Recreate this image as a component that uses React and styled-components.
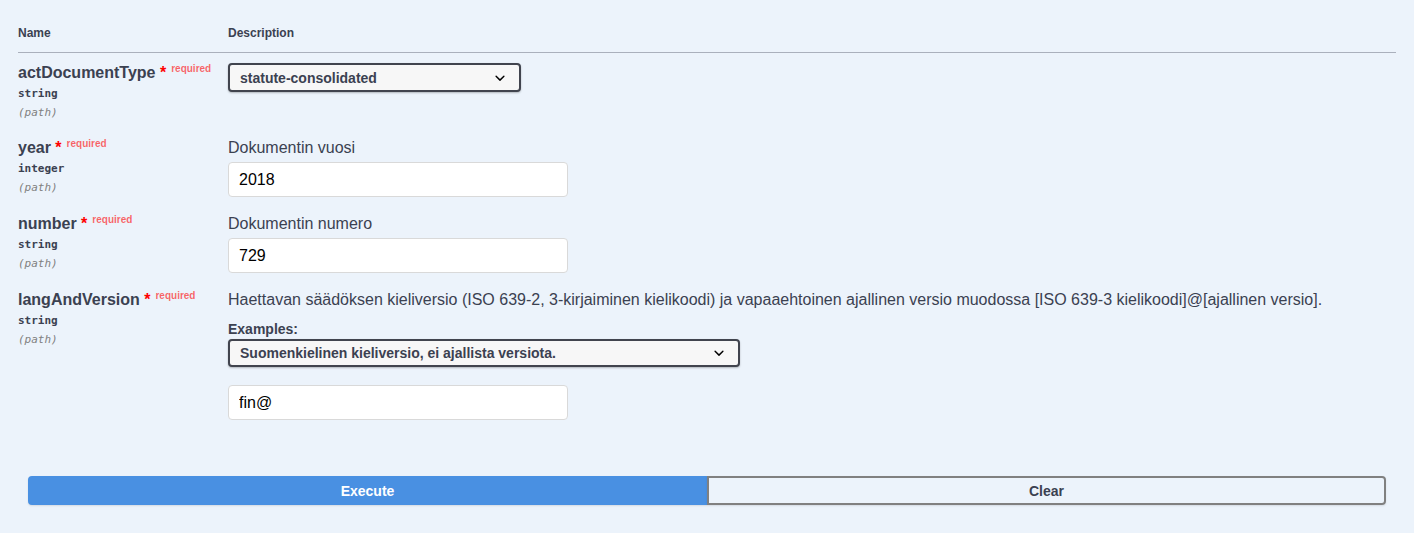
import React from "react";
import styled, { createGlobalStyle } from "styled-components";

const GlobalStyle = createGlobalStyle`
  html, body {
    margin: 0;
    padding: 0;
    background: #ecf3fb;
  }
  body {
    font-family: "Liberation Sans", Arial, sans-serif;
    color: #3b4151;
  }
`;

const Page = styled.div`
  padding: 0 18px;
`;

const TableHead = styled.div`
  display: grid;
  grid-template-columns: 210px 1fr;
  padding: 26px 0 11px;
  border-bottom: 1px solid #aab0bc;
  font-size: 12px;
  font-weight: 700;
  line-height: 15px;
`;

const ParamRow = styled.div`
  display: grid;
  grid-template-columns: 210px 1fr;
  padding: 10px 0 ${(p) => p.$bottom || 0}px;
`;

const NameCol = styled.div`
  display: flex;
  flex-direction: column;
  padding-bottom: 8px;
`;

const ParamName = styled.div`
  font-size: 16px;
  font-weight: 700;
  line-height: 19px;
  white-space: nowrap;
`;

const Star = styled.span`
  color: red;
`;

const Required = styled.span`
  font-size: 10px;
  font-weight: 700;
  line-height: 0;
  color: rgba(255, 0, 0, 0.6);
  padding: 5px;
  position: relative;
  top: -6px;
`;

const ParamType = styled.div`
  font-family: "DejaVu Sans Mono", "Liberation Mono", monospace;
  font-size: 11px;
  font-weight: 700;
  line-height: 14px;
  padding: 5px 0 0;
`;

const ParamIn = styled.div`
  font-family: "DejaVu Sans Mono", "Liberation Mono", monospace;
  font-size: 11px;
  font-style: italic;
  color: #808080;
  line-height: 14px;
  padding-top: 5px;
`;

const DescCol = styled.div`
  display: flex;
  flex-direction: column;
  align-items: flex-start;
`;

const DescText = styled.div`
  font-size: 16px;
  line-height: 19px;
  white-space: nowrap;
`;

const ExamplesLabel = styled.div`
  font-size: 14px;
  font-weight: 700;
  line-height: 16px;
  margin: 12px 0 2px;
`;

const SelectWrap = styled.div`
  position: relative;
  width: ${(p) => p.$width}px;
`;

const Select = styled.select`
  display: block;
  appearance: none;
  width: 100%;
  height: ${(p) => p.$height}px;
  box-sizing: border-box;
  font-family: "Liberation Sans", Arial, sans-serif;
  font-size: 14px;
  font-weight: 700;
  color: #3b4151;
  padding: 0 40px 0 10px;
  background: #f7f7f7;
  border: 2px solid #41444e;
  border-radius: 4px;
  box-shadow: 0 1px 2px 0 rgba(0, 0, 0, 0.25);
  outline: none;
`;

const Arrow = styled.svg`
  position: absolute;
  right: 11px;
  top: 50%;
  width: 20px;
  height: 20px;
  margin-top: -10px;
  pointer-events: none;
`;

const TextInput = styled.input`
  display: block;
  box-sizing: border-box;
  width: 340px;
  height: 35px;
  margin: ${(p) => p.$top}px 0 5px;
  padding: 8px 10px;
  font-family: "Liberation Sans", Arial, sans-serif;
  font-size: 16px;
  color: #000;
  background: #fff;
  border: 1px solid #d9d9d9;
  border-radius: 4px;
  outline: none;
`;

const ButtonBar = styled.div`
  display: flex;
  padding: 51px 10px 28px;
`;

const Button = styled.button`
  flex: 1;
  height: 29px;
  font-family: "Liberation Sans", Arial, sans-serif;
  font-size: 14px;
  font-weight: 700;
  box-shadow: 0 1px 2px rgba(0, 0, 0, 0.1);
  cursor: pointer;
`;

const ExecuteButton = styled(Button)`
  color: #fff;
  background: #4990e2;
  border: 2px solid #4990e2;
  border-radius: 4px 0 0 4px;
`;

const ClearButton = styled(Button)`
  color: #3b4151;
  background: transparent;
  border: 2px solid #808080;
  border-radius: 0 4px 4px 0;
`;

const Chevron = () => (
  <Arrow viewBox="0 0 20 20">
    <path
      fill="#000"
      d="M13.418 7.859a.695.695 0 01.978 0 .68.68 0 010 .969l-3.908 3.83a.697.697 0 01-.979 0l-3.908-3.83a.68.68 0 010-.969.695.695 0 01.978 0L10 11z"
    />
  </Arrow>
);

const DropDown = ({ width, height, value, options }) => (
  <SelectWrap $width={width}>
    <Select $height={height} defaultValue={value}>
      {options.map((o) => (
        <option key={o}>{o}</option>
      ))}
    </Select>
    <Chevron />
  </SelectWrap>
);

const ParamLabel = ({ name, type }) => (
  <NameCol>
    <ParamName>
      {name}
      <Star>&nbsp;*</Star>
      <Required>required</Required>
    </ParamName>
    <ParamType>{type}</ParamType>
    <ParamIn>(path)</ParamIn>
  </NameCol>
);

export default function App() {
  return (
    <Page>
      <GlobalStyle />
      <TableHead>
        <div>Name</div>
        <div>Description</div>
      </TableHead>

      <ParamRow>
        <ParamLabel name="actDocumentType" type="string" />
        <DescCol>
          <DropDown
            width={293}
            height={29}
            value="statute-consolidated"
            options={["statute-consolidated", "statute", "authority-regulation"]}
          />
        </DescCol>
      </ParamRow>

      <ParamRow $bottom={1}>
        <ParamLabel name="year" type="integer" />
        <DescCol>
          <DescText>Dokumentin vuosi</DescText>
          <TextInput $top={5} defaultValue="2018" />
        </DescCol>
      </ParamRow>

      <ParamRow $bottom={1}>
        <ParamLabel name="number" type="string" />
        <DescCol>
          <DescText>Dokumentin numero</DescText>
          <TextInput $top={5} defaultValue="729" />
        </DescCol>
      </ParamRow>

      <ParamRow>
        <ParamLabel name="langAndVersion" type="string" />
        <DescCol>
          <DescText>
            Haettavan säädöksen kieliversio (ISO 639-2, 3-kirjaiminen kielikoodi) ja
            vapaaehtoinen ajallinen versio muodossa [ISO 639-3 kielikoodi]@[ajallinen versio].
          </DescText>
          <ExamplesLabel>Examples:</ExamplesLabel>
          <DropDown
            width={512}
            height={28}
            value="Suomenkielinen kieliversio, ei ajallista versiota."
            options={[
              "Suomenkielinen kieliversio, ei ajallista versiota.",
              "Ruotsinkielinen kieliversio, ei ajallista versiota.",
            ]}
          />
          <TextInput $top={18} defaultValue="fin@" />
        </DescCol>
      </ParamRow>

      <ButtonBar>
        <ExecuteButton>Execute</ExecuteButton>
        <ClearButton>Clear</ClearButton>
      </ButtonBar>
    </Page>
  );
}
